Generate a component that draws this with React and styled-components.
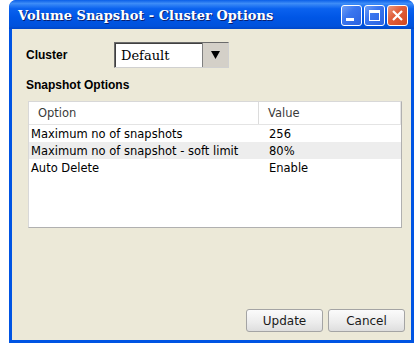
import React from 'react';
import styled, { createGlobalStyle } from 'styled-components';

const Global = createGlobalStyle`
    html, body {
        margin: 0;
        padding: 0;
        background: #ffffff;
    }
    body {
        font-family: 'DejaVu Sans', sans-serif;
    }
`

const rows = [
    { option: 'Maximum no of snapshots', value: '256' },
    { option: 'Maximum no of snapshot - soft limit', value: '80%' },
    { option: 'Auto Delete', value: 'Enable' },
];

export default function App () {
    return (
        <>
            <Global />
            <Screen>
                <Window>
                    <TitleBar>
                        <Title>Volume Snapshot - Cluster Options</Title>
                        <Controls>
                            <WinButton aria-label="minimize">
                                <svg width="21" height="21" viewBox="0 0 21 21">
                                    <rect x="5" y="13" width="8" height="3" fill="#fff" />
                                </svg>
                            </WinButton>
                            <WinButton aria-label="maximize">
                                <svg width="21" height="21" viewBox="0 0 21 21">
                                    <rect x="5.5" y="5.5" width="10" height="10" fill="none" stroke="#fff" />
                                    <rect x="5" y="5" width="11" height="3" fill="#fff" />
                                </svg>
                            </WinButton>
                            <WinButton close aria-label="close">
                                <svg width="21" height="21" viewBox="0 0 21 21">
                                    <path d="M6 6 L15 15 M15 6 L6 15" stroke="#fff" strokeWidth="2.2" />
                                </svg>
                            </WinButton>
                        </Controls>
                    </TitleBar>
                    <Body>
                        <ClusterRow>
                            <Label>Cluster</Label>
                            <Select>
                                <SelectText>Default</SelectText>
                                <SelectArrow>
                                    <svg width="9" height="8" viewBox="0 0 9 8">
                                        <path d="M0 0 H9 L4.5 8 Z" fill="#000" />
                                    </svg>
                                </SelectArrow>
                            </Select>
                        </ClusterRow>
                        <SectionTitle>Snapshot Options</SectionTitle>
                        <Table>
                            <HeaderRow>
                                <HeaderCell>Option</HeaderCell>
                                <HeaderCell last>Value</HeaderCell>
                            </HeaderRow>
                            {rows.map((row, i) => (
                                <Row key={row.option} striped={i % 2 === 1}>
                                    <Cell>{row.option}</Cell>
                                    <Cell value>{row.value}</Cell>
                                </Row>
                            ))}
                        </Table>
                        <Footer>
                            <Button>Update</Button>
                            <Button>Cancel</Button>
                        </Footer>
                    </Body>
                </Window>
            </Screen>
        </>
    )
}

const Screen = styled.div`
    width: 414px;
    height: 343px;
    padding-left: 9px;
    box-sizing: border-box;
    overflow: hidden;
`
const Window = styled.div`
    width: 405px;
    height: 343px;
    display: flex;
    flex-direction: column;
    background: #0054e3;
    border-radius: 7px 7px 0 0;
    box-sizing: border-box;
    overflow: hidden;
`
const TitleBar = styled.div`
    height: 29px;
    flex-shrink: 0;
    display: flex;
    align-items: center;
    justify-content: space-between;
    padding: 0 6px 0 9px;
    background: linear-gradient(to bottom, #0a5fe8 0%, #3d8cf7 12%, #0a62ef 30%, #0056e6 60%, #0052dc 90%, #0046c8 100%);
    border-radius: 7px 7px 0 0;
`
const Title = styled.div`
    color: #ffffff;
    font-family: 'DejaVu Serif', serif;
    font-weight: bold;
    font-size: 13px;
    text-shadow: 1px 1px 0 #0a1e6e;
    padding-top: 1px;
`
const Controls = styled.div`
    display: flex;
    gap: 2px;
    padding-top: 1px;
`
const WinButton = styled.div`
    width: 21px;
    height: 21px;
    box-sizing: border-box;
    border: 1px solid #ffffff;
    border-radius: 3px;
    display: flex;
    align-items: center;
    justify-content: center;
    background: ${props => props.close
        ? 'linear-gradient(135deg, #e99a80 0%, #e1603c 40%, #d2461f 100%)'
        : 'linear-gradient(135deg, #6f9ef5 0%, #3a76ef 40%, #2a62e0 100%)'};

    svg {
        display: block;
        margin: -1px;
    }
`
const Body = styled.div`
    flex: 1;
    margin: 0 3px 3px 3px;
    background: #ece9d8;
    display: flex;
    flex-direction: column;
    padding: 13px 6px 8px 14px;
`
const ClusterRow = styled.div`
    display: flex;
    align-items: center;
    height: 26px;
`
const Label = styled.div`
    width: 88px;
    font-family: 'Liberation Sans', sans-serif;
    font-weight: bold;
    font-size: 12px;
    color: #000;
`
const Select = styled.div`
    width: 115px;
    height: 26px;
    box-sizing: border-box;
    display: flex;
    background: #ffffff;
    border: 1px solid #6b6b6b;
    border-right-color: #d0d0d0;
    border-bottom-color: #d0d0d0;
    box-shadow: inset 1px 1px 0 #404040;
`
const SelectText = styled.div`
    flex: 1;
    display: flex;
    align-items: center;
    padding-left: 6px;
    font-family: 'DejaVu Serif', serif;
    font-size: 13px;
    color: #000;
`
const SelectArrow = styled.div`
    width: 25px;
    background: #d4d0c8;
    border-left: 1px solid #808080;
    display: flex;
    align-items: center;
    justify-content: center;
`
const SectionTitle = styled.div`
    margin-top: 10px;
    font-family: 'Liberation Sans', sans-serif;
    font-weight: bold;
    font-size: 12px;
    color: #000;
`
const Table = styled.div`
    margin: 9px 0 0 2px;
    width: 374px;
    height: 127px;
    box-sizing: border-box;
    background: #ffffff;
    border: 1px solid #b0b0b0;
    border-top-color: #d8d8d8;
    border-left-color: #d8d8d8;
`
const HeaderRow = styled.div`
    display: flex;
    height: 22px;
    border-bottom: 1px solid #e4e4e4;
`
const HeaderCell = styled.div`
    box-sizing: border-box;
    width: ${props => props.last ? 'auto' : '230px'};
    flex: ${props => props.last ? 1 : 'none'};
    padding-left: 9px;
    display: flex;
    align-items: center;
    font-size: 11.5px;
    color: #3a3a3a;
    border-right: 1px solid ${props => props.last ? '#e4e4e4' : '#dcdcdc'};
`
const Row = styled.div`
    display: flex;
    height: 17px;
    align-items: center;
    background: ${props => props.striped ? '#ededed' : '#ffffff'};
`
const Cell = styled.div`
    box-sizing: border-box;
    width: ${props => props.value ? 'auto' : '230px'};
    flex: ${props => props.value ? 1 : 'none'};
    padding-left: ${props => props.value ? '10px' : '2px'};
    font-size: 11.5px;
    color: #000;
    white-space: nowrap;
`
const Footer = styled.div`
    margin-top: auto;
    display: flex;
    justify-content: flex-end;
    gap: 5px;
`
const Button = styled.button`
    width: 77px;
    height: 23px;
    border: 1px solid #a4a4a4;
    border-radius: 3px;
    background: linear-gradient(to bottom, #fbfbfb 0%, #ececec 60%, #dedede 100%);
    font-family: 'DejaVu Sans', sans-serif;
    font-size: 12px;
    color: #1a1a1a;
    padding: 0;
`
